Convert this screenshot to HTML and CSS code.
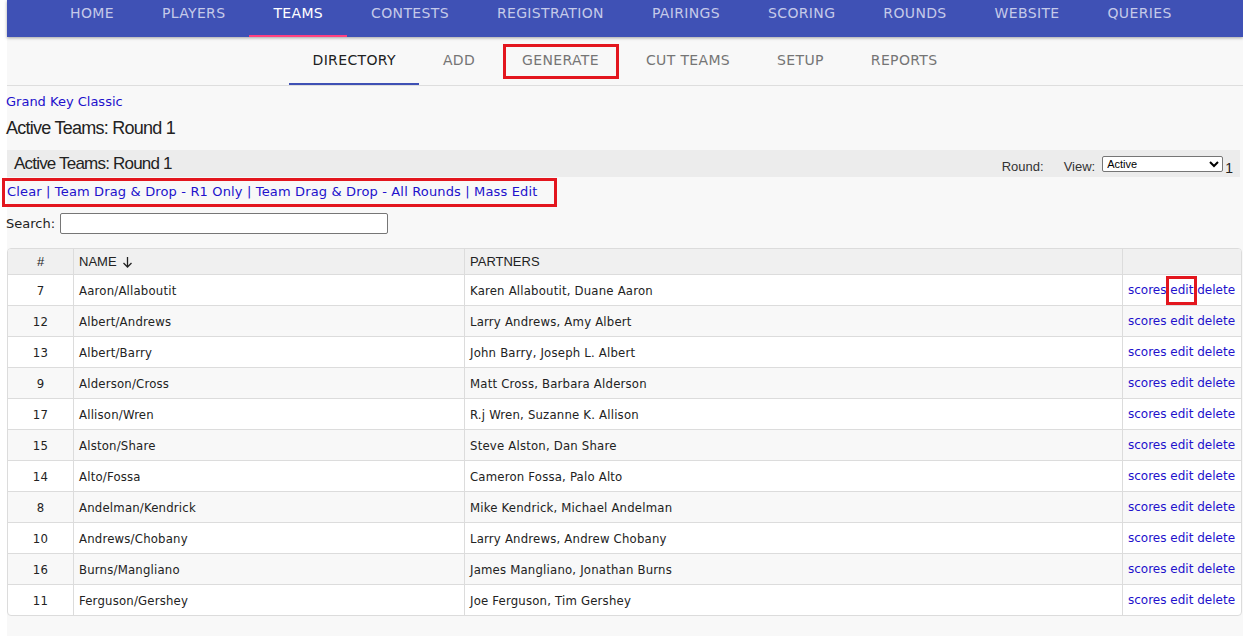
FILE: index.html
```html
<!DOCTYPE html>
<html>
<head>
<meta charset="utf-8">
<title>Teams Directory</title>
<link rel="stylesheet" href="styles.css">
</head>
<body>
<div class="page">
  <nav class="topnav">
    <a class="topnav-item">HOME</a>
    <a class="topnav-item">PLAYERS</a>
    <a class="topnav-item active">TEAMS</a>
    <a class="topnav-item">CONTESTS</a>
    <a class="topnav-item">REGISTRATION</a>
    <a class="topnav-item">PAIRINGS</a>
    <a class="topnav-item">SCORING</a>
    <a class="topnav-item">ROUNDS</a>
    <a class="topnav-item">WEBSITE</a>
    <a class="topnav-item">QUERIES</a>
  </nav>
  <nav class="subnav">
    <a class="subnav-item active">DIRECTORY</a>
    <a class="subnav-item">ADD</a>
    <a class="subnav-item marked">GENERATE<span class="mark mark-generate"></span></a>
    <a class="subnav-item">CUT TEAMS</a>
    <a class="subnav-item">SETUP</a>
    <a class="subnav-item">REPORTS</a>
  </nav>

  <main class="content">
    <a class="event-link">Grand Key Classic</a>
    <h1 class="title">Active Teams: Round 1</h1>

    <div class="panel-bar">
      <h2 class="panel-title">Active Teams: Round 1</h2>
      <div class="panel-controls">
        <span class="ctl-label">Round:</span>
        <span class="ctl-label ctl-view">View:</span>
        <select class="view-select"><option>Active</option><option>All</option></select>
        <span class="ctl-round">1</span>
      </div>
    </div>

    <div class="action-links">
      <a>Clear</a> | <a>Team Drag &amp; Drop - R1 Only</a> | <a>Team Drag &amp; Drop - All Rounds</a> | <a>Mass Edit</a>
      <span class="mark mark-links"></span>
    </div>

    <div class="search-row">
      <label class="search-label">Search:</label>
      <input class="search-input" type="text">
    </div>

    <table class="teams">
      <colgroup>
        <col class="c-num"><col class="c-name"><col class="c-partners"><col class="c-actions">
      </colgroup>
      <thead>
        <tr>
          <th class="num">#</th>
          <th>NAME <svg class="sort-arrow" width="11" height="12" viewBox="0 0 11 12"><path d="M5.5 1 V11 M1.5 7 L5.5 11 L9.5 7" fill="none" stroke="#222" stroke-width="1.3"/></svg></th>
          <th>PARTNERS</th>
          <th></th>
        </tr>
      </thead>
      <tbody>
        <tr><td class="num">7</td><td>Aaron/Allaboutit</td><td>Karen Allaboutit, Duane Aaron</td><td class="acts"><a>scores</a> <a class="edit-marked">edit<span class="mark mark-edit"></span></a> <a>delete</a></td></tr>
        <tr><td class="num">12</td><td>Albert/Andrews</td><td>Larry Andrews, Amy Albert</td><td class="acts"><a>scores</a> <a>edit</a> <a>delete</a></td></tr>
        <tr><td class="num">13</td><td>Albert/Barry</td><td>John Barry, Joseph L. Albert</td><td class="acts"><a>scores</a> <a>edit</a> <a>delete</a></td></tr>
        <tr><td class="num">9</td><td>Alderson/Cross</td><td>Matt Cross, Barbara Alderson</td><td class="acts"><a>scores</a> <a>edit</a> <a>delete</a></td></tr>
        <tr><td class="num">17</td><td>Allison/Wren</td><td>R.j Wren, Suzanne K. Allison</td><td class="acts"><a>scores</a> <a>edit</a> <a>delete</a></td></tr>
        <tr><td class="num">15</td><td>Alston/Share</td><td>Steve Alston, Dan Share</td><td class="acts"><a>scores</a> <a>edit</a> <a>delete</a></td></tr>
        <tr><td class="num">14</td><td>Alto/Fossa</td><td>Cameron Fossa, Palo Alto</td><td class="acts"><a>scores</a> <a>edit</a> <a>delete</a></td></tr>
        <tr><td class="num">8</td><td>Andelman/Kendrick</td><td>Mike Kendrick, Michael Andelman</td><td class="acts"><a>scores</a> <a>edit</a> <a>delete</a></td></tr>
        <tr><td class="num">10</td><td>Andrews/Chobany</td><td>Larry Andrews, Andrew Chobany</td><td class="acts"><a>scores</a> <a>edit</a> <a>delete</a></td></tr>
        <tr><td class="num">16</td><td>Burns/Mangliano</td><td>James Mangliano, Jonathan Burns</td><td class="acts"><a>scores</a> <a>edit</a> <a>delete</a></td></tr>
        <tr><td class="num">11</td><td>Ferguson/Gershey</td><td>Joe Ferguson, Tim Gershey</td><td class="acts"><a>scores</a> <a>edit</a> <a>delete</a></td></tr>
      </tbody>
    </table>
  </main>
</div>
</body>
</html>
```

FILE: styles.css
```css
html, body {
  margin: 0;
  padding: 0;
  background: #ffffff;
}

.page {
  margin-left: 7px;
  min-height: 636px;
  background: #f8f8f8;
  font-family: "DejaVu Sans", Verdana, sans-serif;
  color: #222;
}

a { cursor: pointer; }

/* top navigation */
.topnav {
  display: flex;
  height: 37px;
  padding-left: 39px;
  background: #3f51b5;
  box-shadow: 0 1px 3px rgba(0, 0, 0, 0.35);
  position: relative;
  z-index: 2;
}
.topnav-item {
  display: block;
  box-sizing: border-box;
  height: 37px;
  padding: 0 24px;
  line-height: 27px;
  font-size: 14px;
  letter-spacing: 0.35px;
  color: #c5cae9;
  border-bottom: 2px solid transparent;
}
.topnav-item.active {
  color: #ffffff;
  border-bottom-color: #ff4081;
}

/* sub navigation */
.subnav {
  display: flex;
  justify-content: center;
  height: 48px;
  border-bottom: 1px solid #dedede;
  padding-left: 0;
}
.subnav-item {
  display: block;
  box-sizing: border-box;
  height: 48px;
  padding: 0 23.5px;
  line-height: 47px;
  font-size: 14px;
  letter-spacing: 0.35px;
  color: #757575;
  border-bottom: 2px solid transparent;
  position: relative;
}
.subnav-item.active {
  color: #212121;
  border-bottom-color: #3f51b5;
}

/* red annotation boxes */
.mark {
  position: absolute;
  border: 3px solid #e3161e;
  pointer-events: none;
}
.mark-generate {
  left: 4px;
  right: 3px;
  top: 7px;
  bottom: 4px;
}

/* content */
.content {
  padding: 8px 3px 0 0;
}
.event-link {
  display: block;
  font-size: 13px;
  line-height: 16px;
  color: #2211cc;
  margin-left: -1px;
}
.title {
  margin: 6px 0 0 -1px;
  font-family: "Liberation Sans", Arial, sans-serif;
  font-weight: normal;
  font-size: 18px;
  letter-spacing: -0.75px;
  line-height: 24px;
  color: #222;
}

.panel-bar {
  margin-top: 10px;
  height: 27px;
  background: #ececec;
  display: flex;
  justify-content: space-between;
  align-items: center;
  padding: 0 7px;
}
.panel-title {
  margin: 0;
  font-family: "Liberation Sans", Arial, sans-serif;
  font-weight: normal;
  font-size: 17px;
  letter-spacing: -0.8px;
  line-height: 27px;
  color: #222;
}
.panel-controls {
  display: flex;
  align-items: center;
  font-family: "Liberation Sans", Arial, sans-serif;
  font-size: 13px;
  color: #333;
  padding-top: 1px;
}
.ctl-label {
  margin-top: 4px;
}
.ctl-view {
  margin-left: 20px;
  margin-right: 7px;
}
.view-select {
  width: 121px;
  height: 16px;
  padding: 0;
  margin: 0 2px 0 0;
  font-family: "Liberation Sans", Arial, sans-serif;
  font-size: 11px;
  border: 1px solid #767676;
  border-radius: 2px;
  background: #fff;
  color: #000;
  align-self: flex-start;
  margin-top: 3px;
}
.ctl-round {
  font-size: 14px;
  margin-top: 7px;
  color: #222;
}

.action-links {
  position: relative;
  height: 28px;
  line-height: 29px;
  font-size: 13px;
  letter-spacing: 0.15px;
  color: #2211cc;
}
.action-links a {
  color: #2211cc;
}
.mark-links {
  left: -5px;
  top: 1px;
  width: 549px;
  height: 23px;
}

.search-row {
  margin-top: 7px;
  height: 22px;
  display: flex;
  align-items: center;
  font-size: 13px;
}
.search-label {
  color: #222;
  margin-left: -1px;
}
.search-input {
  box-sizing: border-box;
  width: 328px;
  height: 21px;
  margin: 0 0 0 5px;
  border: 1px solid #767676;
  border-radius: 2px;
  background: #fff;
}

/* table */
.teams {
  margin-top: 14px;
  width: 1233px;
  table-layout: fixed;
  border-collapse: separate;
  border-spacing: 0;
  border: 1px solid #dcdcdc;
  border-radius: 4px;
  background: #fff;
  overflow: hidden;
}
.c-num { width: 66px; }
.c-name { width: 391px; }
.c-partners { width: 658px; }
.c-actions { width: 118px; }

.teams th {
  background: #f0f0f0;
  height: 25px;
  padding: 0 5px;
  text-align: left;
  font-family: "Liberation Sans", Arial, sans-serif;
  font-weight: normal;
  font-size: 13px;
  color: #222;
  border-bottom: 1px solid #dcdcdc;
  border-right: 1px solid #dcdcdc;
}
.teams td {
  height: 30px;
  padding: 0 5px;
  font-family: "DejaVu Sans Condensed", "DejaVu Sans", sans-serif;
  font-stretch: condensed;
  font-size: 13px;
  letter-spacing: 0.2px;
  color: #222;
  border-bottom: 1px solid #dcdcdc;
  border-right: 1px solid #dcdcdc;
  white-space: nowrap;
}
.teams th:last-child,
.teams td:last-child {
  border-right: none;
}
.teams tbody tr:last-child td {
  border-bottom: none;
}
.teams tbody tr:nth-child(even) td {
  background: #f8f8f8;
}
.teams .num {
  text-align: center;
}
.sort-arrow {
  vertical-align: -2px;
  margin-left: 2px;
}
.teams td.acts {
  font-family: "DejaVu Sans", Verdana, sans-serif;
  font-stretch: normal;
  font-size: 12px;
  letter-spacing: 0;
  padding-left: 5px;
}
.acts a {
  color: #2211cc;
}
.edit-marked {
  position: relative;
}
.mark-edit {
  left: -4px;
  right: -4px;
  top: -7px;
  bottom: -8px;
}
```
